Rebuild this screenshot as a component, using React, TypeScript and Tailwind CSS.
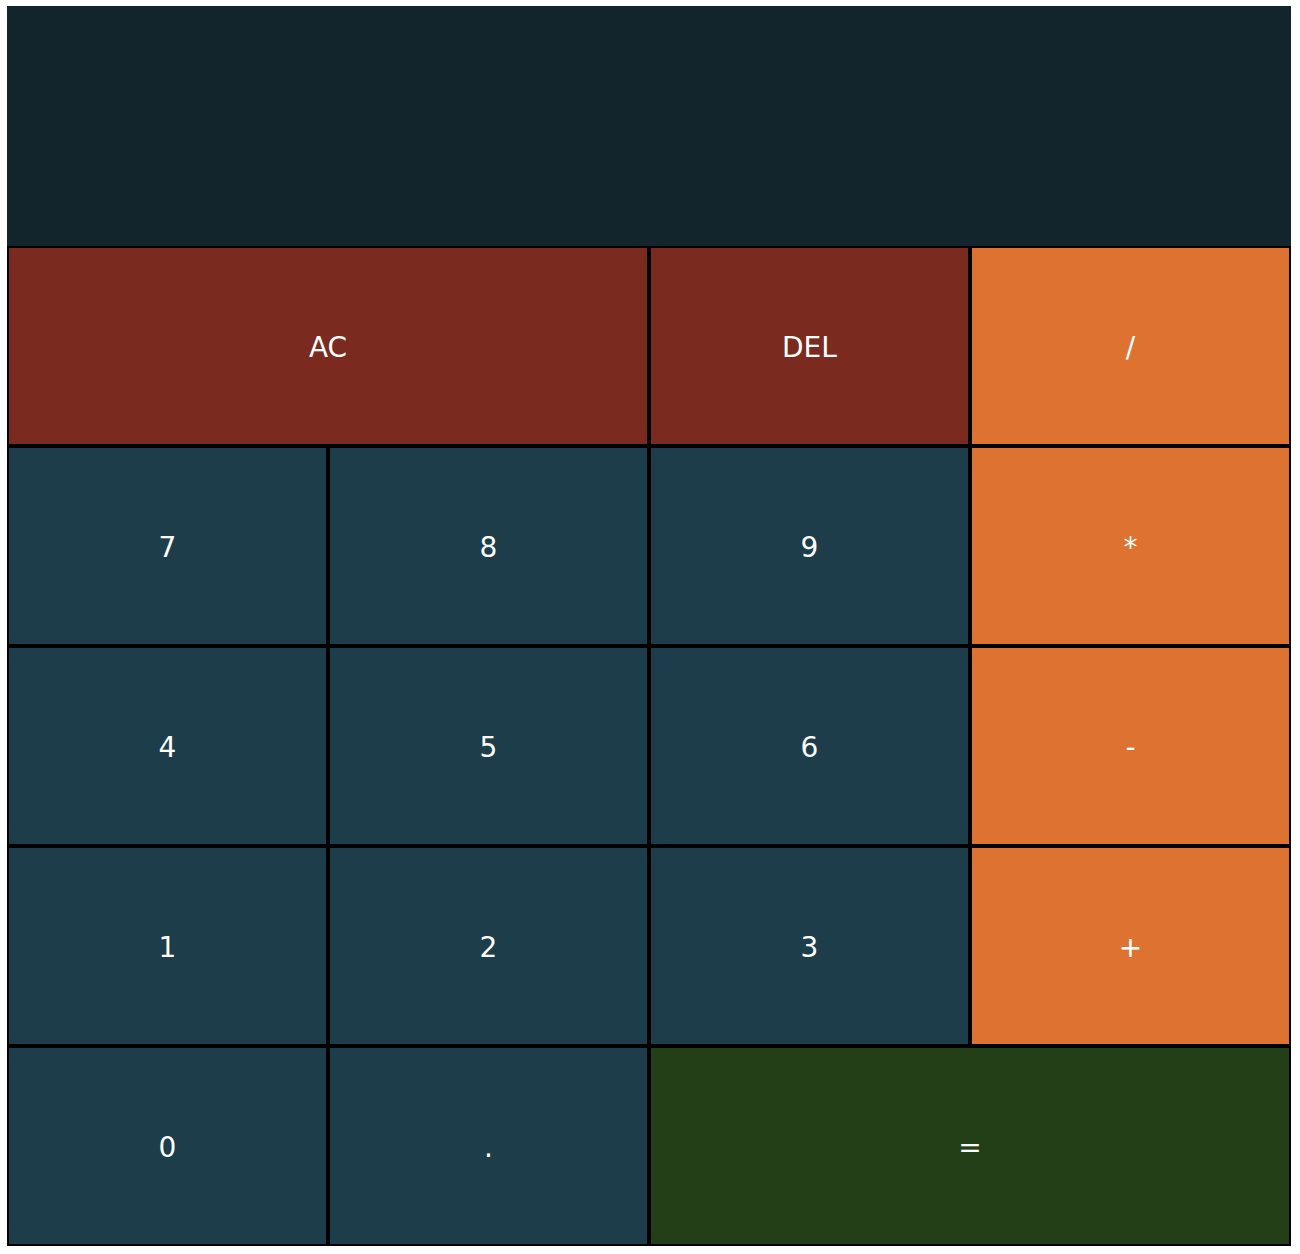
import React from 'react';

type Key = { label: string; bg: string; span?: string };

const keys: Key[] = [
  { label: 'AC', bg: 'bg-[#7a2a1f]', span: 'col-span-2' },
  { label: 'DEL', bg: 'bg-[#7a2a1f]' },
  { label: '/', bg: 'bg-[#dd7231]' },
  { label: '7', bg: 'bg-[#1e3d4a]' },
  { label: '8', bg: 'bg-[#1e3d4a]' },
  { label: '9', bg: 'bg-[#1e3d4a]' },
  { label: '*', bg: 'bg-[#dd7231]' },
  { label: '4', bg: 'bg-[#1e3d4a]' },
  { label: '5', bg: 'bg-[#1e3d4a]' },
  { label: '6', bg: 'bg-[#1e3d4a]' },
  { label: '-', bg: 'bg-[#dd7231]' },
  { label: '1', bg: 'bg-[#1e3d4a]' },
  { label: '2', bg: 'bg-[#1e3d4a]' },
  { label: '3', bg: 'bg-[#1e3d4a]' },
  { label: '+', bg: 'bg-[#dd7231]' },
  { label: '0', bg: 'bg-[#1e3d4a]' },
  { label: '.', bg: 'bg-[#1e3d4a]' },
  { label: '=', bg: 'bg-[#233f18]', span: 'col-span-2' },
];

export default function App() {
  return (
    <div className="min-h-screen bg-white pt-[6px] pl-[7px]" style={{ fontFamily: '"DejaVu Sans", Verdana, sans-serif' }}>
      <div className="w-[1284px]">
        {/* Display */}
        <div className="h-[240px] bg-[#13252c]" />

        {/* Keypad */}
        <div className="grid grid-cols-4 auto-rows-[200px]">
          {keys.map((k) => (
            <button
              key={k.label}
              className={`${k.bg} ${k.span ?? ''} border-2 border-black text-white text-[28px] pt-[4px] flex items-center justify-center`}
            >
              {k.label}
            </button>
          ))}
        </div>
      </div>
    </div>
  );
}
